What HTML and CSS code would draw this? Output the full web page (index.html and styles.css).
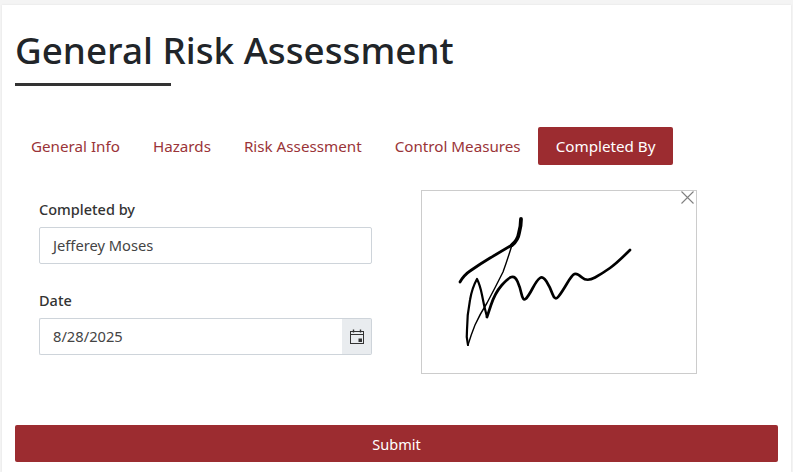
FILE: index.html
```html
<!DOCTYPE html>
<html lang="en">

<head>
  <meta charset="UTF-8" />
  <meta name="viewport" content="width=device-width, initial-scale=1.0" />
  <title>General Risk Assessment</title>
  <link rel="stylesheet" href="styles.css">
</head>

<body>
  <div class="card">
    <h1 class="title">General Risk Assessment</h1>
    <div class="title-rule"></div>

    <nav class="tabs">
      <a class="tab">General Info</a>
      <a class="tab">Hazards</a>
      <a class="tab">Risk Assessment</a>
      <a class="tab">Control Measures</a>
      <a class="tab active">Completed By</a>
    </nav>

    <div class="panel">
      <div class="fields">
        <div class="field">
          <label class="field-label">Completed by</label>
          <div class="input">Jefferey Moses</div>
        </div>
        <div class="field">
          <label class="field-label">Date</label>
          <div class="input-group">
            <div class="input input-date">8/28/2025</div>
            <span class="addon">
              <svg width="14" height="15" viewBox="0 0 14 15" fill="none" stroke="#333" stroke-width="1">
                <rect x="0.5" y="2.5" width="13" height="12" />
                <path d="M0.5 5.5H13.5" />
                <path d="M3.5 0.5V3.5M10.5 0.5V3.5" stroke-width="1.4" />
                <rect x="8.5" y="9.5" width="3.5" height="3.5" fill="#333" stroke="none" />
              </svg>
            </span>
          </div>
        </div>
      </div>

      <div class="signature">
        <svg class="signature-close" width="13" height="13" viewBox="0 0 13 13" stroke="#808080" stroke-width="1.1">
          <path d="M0.5 0.5L12.5 12.5M12.5 0.5L0.5 12.5" />
        </svg>
        <svg class="signature-ink" width="274" height="182" viewBox="0 0 274 182" fill="none" stroke="#000" stroke-linecap="round" stroke-linejoin="round">
          <path stroke-width="2.8" d="M38 91Q42 84 48 80Q58 73 68 67Q80 60 90 54" />
          <path stroke-width="3.8" d="M90 54Q96 49 97 42Q99 35 99 28" />
          <path stroke-width="1.4" d="M90 54Q85 70 81 81Q73 97 65 112Q58 123 53 134Q49 144 46 154" />
          <path stroke-width="2.2" d="M46 154Q44 146 45 139Q45 124 48 109Q50 97 55 88Q58 94 60 104Q62 115 65 126" />
          <path stroke-width="2.7" d="M65 126L69 114Q73 102 79.5 94.5Q86 87 89.5 86Q93 85 95.5 90.5Q98 96 99.5 103Q101 110 103.5 108Q106 106 110.5 97.5Q115 89 118 87Q121 85 124.5 90.5Q128 96 130.5 103Q133 110 136.5 105.5Q140 101 145 92.5Q150 84 152.5 83Q155 82 160 86.5Q165 91 173 86.5Q181 82 188 77Q195 72 208 59" />
        </svg>
      </div>
    </div>

    <button class="submit">Submit</button>
  </div>
</body>

</html>
```

FILE: styles.css
```css
* {
  box-sizing: border-box;
}

body {
  background: #f4f4f4;
  height: 100vh;
  overflow: hidden;
  margin: 0;
  padding: 5px 2px 0;
  font-family: 'Noto Sans', 'Open Sans', sans-serif;
  color: #333;
}

.card {
  background: white;
  height: 100%;
  padding: 0 13px;
  box-shadow: 0 0 2px rgba(0, 0, 0, 0.08);
}

.title {
  margin: 0;
  padding-top: 20px;
  font-size: 36.8px;
  line-height: 50px;
  font-weight: 500;
  color: #212529;
}

.title-rule {
  width: 156px;
  height: 3px;
  margin-top: 8px;
  background: #333;
}

.tabs {
  display: flex;
  margin-top: 41px;
}

.tab {
  padding: 0 16.5px;
  height: 38px;
  line-height: 38px;
  font-size: 15.2px;
  color: #9a3438;
  border-radius: 2px;
}

.tab:first-child {
  padding-left: 16px;
}

.tab.active {
  background: #9c2c30;
  color: white;
  margin-left: 1px;
  padding: 0 17.5px;
}

.panel {
  display: flex;
  margin-top: 25px;
  padding-left: 24px;
}

.fields {
  width: 333px;
  padding-top: 9px;
}

.field {
  margin-bottom: 26px;
}

.field-label {
  display: block;
  font-size: 14.5px;
  line-height: 20px;
  font-weight: 500;
  margin-bottom: 8px;
}

.input {
  height: 37px;
  line-height: 35px;
  padding: 0 13px;
  font-size: 14.7px;
  color: #444;
  border: 1px solid #ced4da;
  border-radius: 2px;
}

.input-group {
  display: flex;
}

.input-date {
  flex: 1;
  border-right: none;
  border-radius: 2px 0 0 2px;
}

.addon {
  display: flex;
  align-items: center;
  justify-content: center;
  width: 30px;
  background: #e9ecef;
  border: 1px solid #ced4da;
  border-left: none;
  border-radius: 0 2px 2px 0;
}

.signature {
  position: relative;
  width: 276px;
  height: 184px;
  margin-left: 49px;
  border: 1px solid #ccc;
}

.signature-close {
  position: absolute;
  top: 0;
  right: 2px;
}

.signature-ink {
  display: block;
}

.submit {
  display: block;
  width: 100%;
  height: 37px;
  margin-top: 44px;
  background: #9c2c30;
  border: none;
  border-radius: 2px;
  color: white;
  font-family: inherit;
  font-size: 14.5px;
  cursor: pointer;
}
```
